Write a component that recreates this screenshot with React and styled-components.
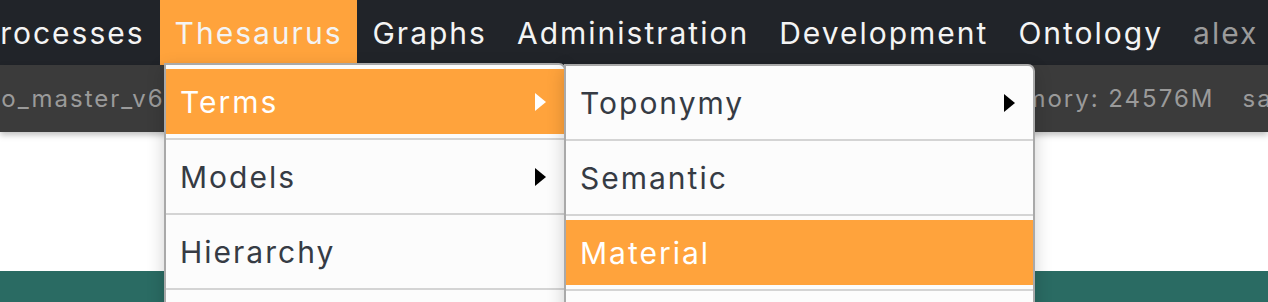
import React from "react"
import styled, { createGlobalStyle } from "styled-components"

const GlobalStyle = createGlobalStyle`
  html, body {
    margin: 0;
    padding: 0;
    background: #ffffff;
    overflow: hidden;
  }
  body {
    font-family: Inter, "Noto Sans", "Liberation Sans", sans-serif;
  }
`

const Page = styled.div`
  position: relative;
  width: 1268px;
  height: 302px;
  display: flex;
  flex-direction: column;
  overflow: hidden;
`

const NavBar = styled.nav`
  height: 65px;
  flex: none;
  background: #212429;
  display: flex;
  align-items: stretch;
  margin-left: -36px;
`

const NavItem = styled.div`
  display: flex;
  align-items: center;
  padding: 0 15px;
  font-size: 30px;
  letter-spacing: 2px;
  color: ${(p) => (p.$muted ? "#9b9b9b" : "#f4f4f4")};
  background: ${(p) => (p.$active ? "#ffa33c" : "transparent")};
  white-space: nowrap;
`

const StatusBar = styled.div`
  height: 67px;
  flex: none;
  background: #3b3b3b;
  display: flex;
  align-items: center;
  gap: 28px;
  color: #9a9a9a;
  font-size: 24px;
  letter-spacing: 2px;
  white-space: nowrap;
  box-shadow: 0 3px 6px rgba(0, 0, 0, 0.25);
  position: relative;
  z-index: 1;
`

const StatusText = styled.span`
  margin-left: ${(p) => p.$offset || 0}px;
`

const Content = styled.div`
  height: 139px;
  flex: none;
  background: #ffffff;
`

const Footer = styled.div`
  flex: 1;
  background: #2a6b63;
`

const Menu = styled.ul`
  position: absolute;
  z-index: 5;
  top: ${(p) => p.$top}px;
  left: ${(p) => p.$left}px;
  width: ${(p) => p.$width}px;
  margin: 0;
  padding: 4px 0 0;
  list-style: none;
  background: #fcfcfc;
  border: 2px solid #a9a9a9;
  border-radius: 0 7px 0 0;
  box-shadow: 0 6px 18px rgba(0, 0, 0, 0.18);
  letter-spacing: 2px;
`

const Item = styled.li`
  border-top: ${(p) => (p.$first ? "none" : "2px solid #d4d4d4")};
  padding: ${(p) => (p.$first ? "0 0 4px" : "4px 0")};
`

const Row = styled.div`
  height: 65px;
  display: flex;
  align-items: center;
  justify-content: space-between;
  padding: 0 18px 0 14px;
  font-size: 30px;
  color: ${(p) => (p.$active ? "#ffffff" : "#363b44")};
  background: ${(p) => (p.$active ? "#ffa33c" : "transparent")};
`

const Arrow = styled.span`
  width: 0;
  height: 0;
  border-top: 9px solid transparent;
  border-bottom: 9px solid transparent;
  border-left: 11px solid ${(p) => (p.$light ? "#ffffff" : "#000000")};
`

function MenuList({ items, ...rest }) {
  return (
    <Menu {...rest}>
      {items.map((it, i) => (
        <Item key={it.label} $first={i === 0}>
          <Row $active={it.active}>
            {it.label}
            {it.sub && <Arrow $light={it.active} />}
          </Row>
        </Item>
      ))}
    </Menu>
  )
}

const thesaurus = [
  { label: "Terms", sub: true, active: true },
  { label: "Models", sub: true },
  { label: "Hierarchy" },
  { label: "Places" },
]

const terms = [
  { label: "Toponymy", sub: true },
  { label: "Semantic" },
  { label: "Material", active: true },
  { label: "Technique" },
]

export default function App() {
  return (
    <>
      <GlobalStyle />
      <Page>
        <NavBar>
          <NavItem>Processes</NavItem>
          <NavItem $active>Thesaurus</NavItem>
          <NavItem>Graphs</NavItem>
          <NavItem>Administration</NavItem>
          <NavItem>Development</NavItem>
          <NavItem>Ontology</NavItem>
          <NavItem $muted>alex</NavItem>
        </NavBar>
        <StatusBar>
          <StatusText $offset={-42}>repo_master_v6</StatusText>
          <StatusText $offset={792}>Memory: 24576M</StatusText>
          <StatusText>saved</StatusText>
        </StatusBar>
        <Content />
        <Footer />
        <MenuList items={thesaurus} $top={63} $left={164} $width={398} />
        <MenuList items={terms} $top={64} $left={564} $width={467} />
      </Page>
    </>
  )
}
